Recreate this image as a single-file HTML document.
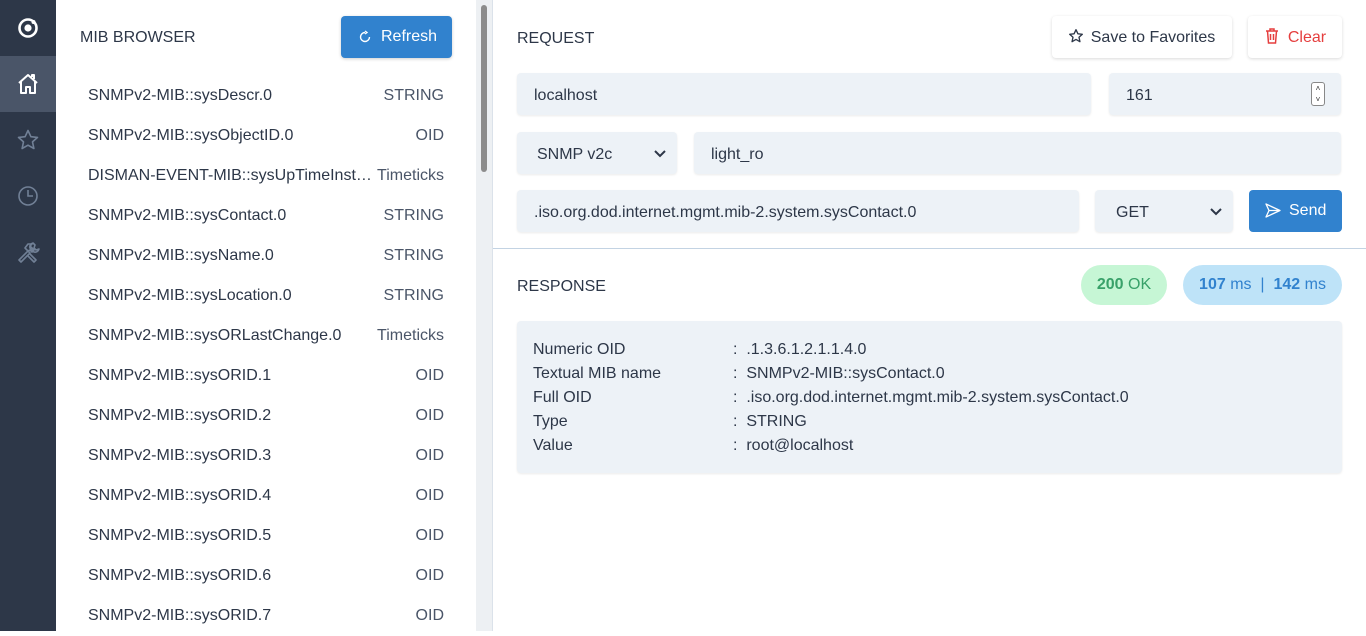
<!DOCTYPE html>
<html><head><meta charset="utf-8"><style>
*{box-sizing:border-box;margin:0;padding:0}
body{width:1366px;height:631px;overflow:hidden;font-family:"Liberation Sans",sans-serif;font-size:16px;color:#2d3748;background:#fff;position:relative}
.a{position:absolute}
.side{left:0;top:0;width:56px;height:631px;background:#2d3748}
.row{position:absolute;left:88px;width:356px;height:40px;line-height:40px;display:flex;justify-content:space-between;white-space:nowrap}
.row span:last-child{color:#4a5568}
.inp{position:absolute;background:#edf2f7;border-radius:4px;height:42px;line-height:46px;padding-left:17px;box-shadow:0 1px 2px rgba(0,0,0,.08)}
.btn{position:absolute;height:42px;line-height:44px;border-radius:4px;background:#fff;box-shadow:0 1px 3px rgba(0,0,0,.15);text-align:center}
.kv{position:absolute;left:533px;line-height:24px}
</style></head><body>
<div class="a side"></div>
<div class="a" style="left:0;top:56px;width:56px;height:56px;background:#4a5568"></div>
<svg class="a" style="left:17px;top:17px" width="22" height="22" viewBox="0 0 22 22"><circle cx="11" cy="11" r="8.5" fill="none" stroke="#fff" stroke-width="2.6"/><circle cx="11" cy="11" r="3.6" fill="#fff"/><circle cx="16.5" cy="5" r="2" fill="#fff"/></svg>
<svg class="a" style="left:16px;top:72px" width="24" height="24" viewBox="0 0 24 24" fill="none" stroke="#fff" stroke-width="2" stroke-linejoin="round"><path d="M3 11L12 3l9 8M5 9v12h5v-6h4v6h5V9"/><path d="M16 5V3h2v4"/></svg>
<svg class="a" style="left:16px;top:128px" width="24" height="24" viewBox="0 0 24 24" fill="none" stroke="#718096" stroke-width="1.6" stroke-linejoin="round"><path d="M12 2.5l2.9 6.2 6.6.7-5 4.5 1.4 6.6L12 17.2l-5.9 3.3 1.4-6.6-5-4.5 6.6-.7z"/></svg>
<svg class="a" style="left:17px;top:185px" width="22" height="22" viewBox="0 0 22 22" fill="none" stroke="#718096" stroke-width="1.6"><circle cx="11" cy="11" r="9"/><path d="M11 5v6h5"/></svg>
<svg class="a" style="left:16px;top:240px" width="24" height="24" viewBox="0 0 24 24" fill="none" stroke="#718096" stroke-width="1.6" stroke-linejoin="round"><path d="M3 20l9-9 2 2-9 9zM12 11l-3-3 3-4h4l-2 2 4 4-2 2-2-2z"/><path d="M14 14l6 6-2 2-6-6M17 3a4 4 0 0 0-3 5l4 4a4 4 0 0 0 5-3l-3 1-2-2 1-3z"/></svg>

<div class="a" style="left:80px;top:29px;font-size:16px;line-height:18px">MIB BROWSER</div>
<div class="a" style="left:341px;top:16px;width:111px;height:42px;background:#3182ce;border-radius:4px;color:#fff;line-height:42px;padding-left:40px;box-shadow:0 1px 3px rgba(0,0,0,.2)">Refresh</div>
<svg class="a" style="left:358px;top:30px" width="14" height="14" viewBox="0 0 14 14" fill="none" stroke="#fff" stroke-width="1.4"><path d="M11.5 7A4.5 4.5 0 1 1 7 2.5M7 1l2 1.5L7 4"/></svg>

<div class="row" style="top:76px"><span>SNMPv2-MIB::sysDescr.0</span><span>STRING</span></div>
<div class="row" style="top:116px"><span>SNMPv2-MIB::sysObjectID.0</span><span>OID</span></div>
<div class="row" style="top:156px"><span>DISMAN-EVENT-MIB::sysUpTimeInst…</span><span>Timeticks</span></div>
<div class="row" style="top:196px"><span>SNMPv2-MIB::sysContact.0</span><span>STRING</span></div>
<div class="row" style="top:236px"><span>SNMPv2-MIB::sysName.0</span><span>STRING</span></div>
<div class="row" style="top:276px"><span>SNMPv2-MIB::sysLocation.0</span><span>STRING</span></div>
<div class="row" style="top:316px"><span>SNMPv2-MIB::sysORLastChange.0</span><span>Timeticks</span></div>
<div class="row" style="top:356px"><span>SNMPv2-MIB::sysORID.1</span><span>OID</span></div>
<div class="row" style="top:396px"><span>SNMPv2-MIB::sysORID.2</span><span>OID</span></div>
<div class="row" style="top:436px"><span>SNMPv2-MIB::sysORID.3</span><span>OID</span></div>
<div class="row" style="top:476px"><span>SNMPv2-MIB::sysORID.4</span><span>OID</span></div>
<div class="row" style="top:516px"><span>SNMPv2-MIB::sysORID.5</span><span>OID</span></div>
<div class="row" style="top:556px"><span>SNMPv2-MIB::sysORID.6</span><span>OID</span></div>
<div class="row" style="top:596px"><span>SNMPv2-MIB::sysORID.7</span><span>OID</span></div>

<div class="a" style="left:476px;top:0;width:16px;height:631px;background:#edf0f3"></div>
<div class="a" style="left:481px;top:5px;width:6px;height:167px;background:#8c8c8c;border-radius:3px"></div>
<div class="a" style="left:492px;top:0;width:1px;height:631px;background:#dbe2ea"></div>

<div class="a" style="left:517px;top:30px;line-height:18px">REQUEST</div>
<div class="btn" style="left:1052px;top:16px;width:180px;padding-left:22px">Save to Favorites</div>
<svg class="a" style="left:1068px;top:28px" width="16" height="16" viewBox="0 0 24 24" fill="none" stroke="#2d3748" stroke-width="2" stroke-linejoin="round"><path d="M12 2.5l2.9 6.2 6.6.7-5 4.5 1.4 6.6L12 17.2l-5.9 3.3 1.4-6.6-5-4.5 6.6-.7z"/></svg>
<div class="btn" style="left:1248px;top:16px;width:94px;color:#e53e3e;padding-left:24px">Clear</div>
<svg class="a" style="left:1265px;top:28px" width="14" height="16" viewBox="0 0 14 16" fill="none" stroke="#e53e3e" stroke-width="1.5"><path d="M1 3h12M5 3V1h4v2M2.5 3l1 12h7l1-12M5.5 6v6M8.5 6v6"/></svg>

<div class="inp" style="left:517px;top:73px;width:574px">localhost</div>
<div class="inp" style="left:1109px;top:73px;width:232px">161</div>
<div class="a" style="left:1311px;top:82px;width:14px;height:24px;border:1px solid #888;border-radius:3px;background:#fff;font-size:8px;line-height:11px;text-align:center;color:#333">˄<br>˅</div>
<div class="inp" style="left:517px;top:132px;width:160px;padding-left:20px">SNMP v2c</div>
<svg class="a" style="left:654px;top:150px" width="12" height="8" viewBox="0 0 12 8" fill="none" stroke="#2d3748" stroke-width="2"><path d="M1 1l5 5 5-5"/></svg>
<div class="inp" style="left:694px;top:132px;width:647px">light_ro</div>
<div class="inp" style="left:517px;top:190px;width:562px">.iso.org.dod.internet.mgmt.mib-2.system.sysContact.0</div>
<div class="inp" style="left:1095px;top:190px;width:138px;padding-left:21px">GET</div>
<svg class="a" style="left:1210px;top:208px" width="12" height="8" viewBox="0 0 12 8" fill="none" stroke="#2d3748" stroke-width="2"><path d="M1 1l5 5 5-5"/></svg>
<div class="a" style="left:1249px;top:190px;width:93px;height:42px;background:#3182ce;border-radius:4px;color:#fff;line-height:42px;padding-left:40px">Send</div>
<svg class="a" style="left:1265px;top:203px" width="16" height="15" viewBox="0 0 16 15" fill="none" stroke="#fff" stroke-width="1.3" stroke-linejoin="round"><path d="M1 1l14 6.5L1 14l3-6.5zM4 7.5h11"/></svg>

<div class="a" style="left:493px;top:248px;width:873px;height:1px;background:#c3d3e3"></div>

<div class="a" style="left:517px;top:278px;line-height:18px">RESPONSE</div>
<div class="a" style="left:1081px;top:265px;width:86px;height:40px;border-radius:20px;background:#c6f6d5;color:#38a169;line-height:40px;text-align:center"><b>200</b> OK</div>
<div class="a" style="left:1183px;top:265px;width:159px;height:40px;border-radius:20px;background:#bee3f8;color:#3182ce;line-height:40px;text-align:center"><b>107</b> ms &nbsp;|&nbsp; <b>142</b> ms</div>

<div class="a" style="left:517px;top:321px;width:825px;height:152px;background:#edf2f7;border-radius:4px;box-shadow:0 1px 2px rgba(0,0,0,.08)"></div>
<div class="kv" style="top:338px">Numeric OID</div>
<div class="kv" style="top:362px">Textual MIB name</div>
<div class="kv" style="top:386px">Full OID</div>
<div class="kv" style="top:410px">Type</div>
<div class="kv" style="top:434px">Value</div>
<div class="a" style="left:733px;top:338px;line-height:24px">:&nbsp; .1.3.6.1.2.1.1.4.0<br>:&nbsp; SNMPv2-MIB::sysContact.0<br>:&nbsp; .iso.org.dod.internet.mgmt.mib-2.system.sysContact.0<br>:&nbsp; STRING<br>:&nbsp; root@localhost</div>
</body></html>
